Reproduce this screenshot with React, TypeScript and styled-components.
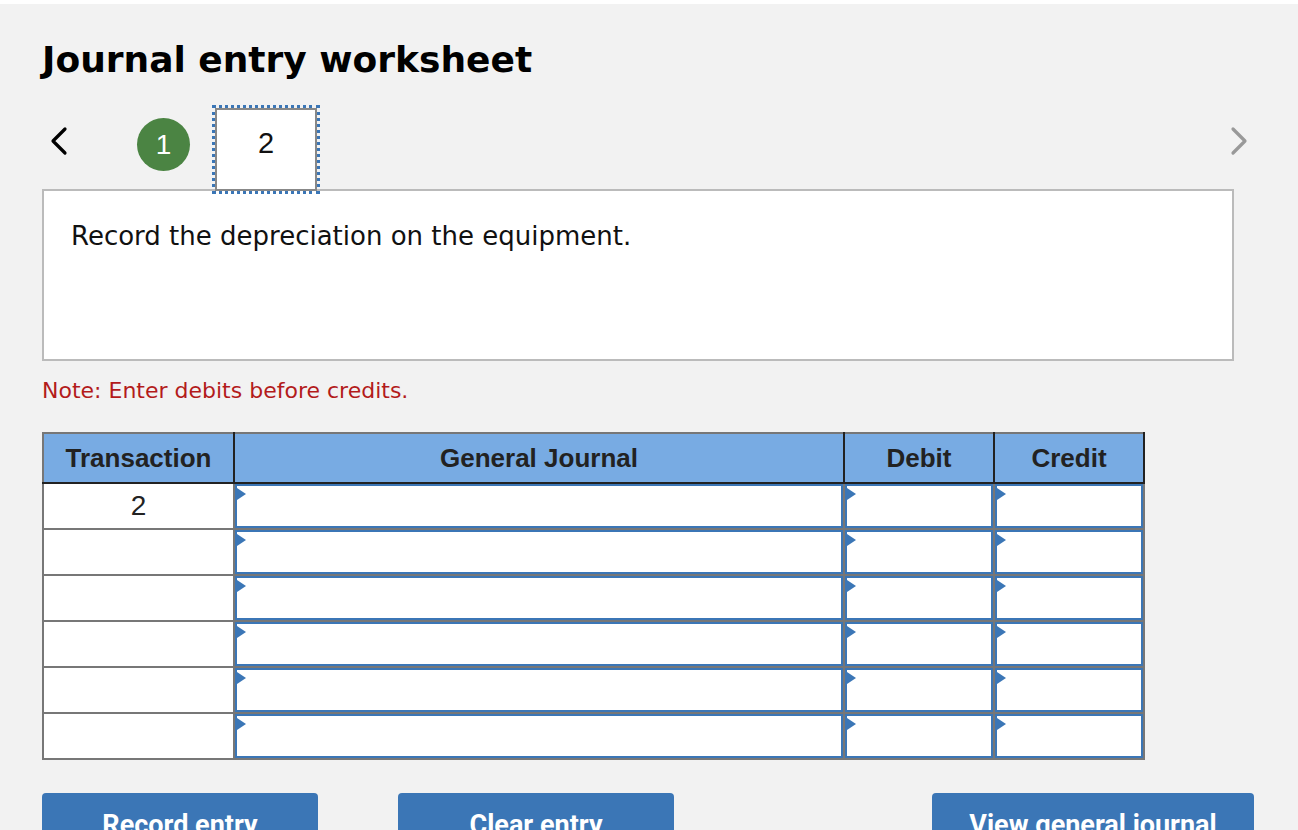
import styled, { createGlobalStyle } from "styled-components";

const GlobalStyle = createGlobalStyle`
    html, body {
        margin: 0;
        padding: 0;
        background: #ffffff;
    }
    body {
        font-family: "DejaVu Sans", Verdana, sans-serif;
    }
`;

const Page = styled.div`
    margin-top: 4px;
    min-height: 826px;
    background: #f2f2f2;
    padding: 0 44px 0 42px;
    box-sizing: border-box;
    overflow: hidden;
`;

const Title = styled.h1`
    margin: 0;
    padding-top: 36px;
    font-family: "DejaVu Sans", Verdana, sans-serif;
    font-weight: bold;
    font-size: 36px;
    line-height: 40px;
    color: #000;
`;

const NavRow = styled.div`
    display: flex;
    align-items: flex-start;
    height: 83px;
    margin-top: 28px;
    position: relative;
    z-index: 1;
`;

const Arrow = styled.button<{ $muted?: boolean }>`
    display: flex;
    align-items: center;
    justify-content: center;
    width: 30px;
    height: 40px;
    margin-top: 13px;
    padding: 0;
    border: none;
    background: none;
    color: ${(p) => (p.$muted ? "#999999" : "#000000")};
    cursor: pointer;
    margin-left: ${(p) => (p.$muted ? "auto" : "2px")};
`;

const StepDone = styled.div`
    width: 53px;
    height: 53px;
    margin-top: 10px;
    margin-left: 63px;
    border-radius: 50%;
    background: #4b8443;
    color: #fff;
    display: flex;
    align-items: center;
    justify-content: center;
    font-family: "Liberation Sans", Arial, sans-serif;
    font-size: 28px;
`;

const StepActive = styled.div`
    width: 102px;
    height: 83px;
    margin-left: 25px;
    padding-bottom: 12px;
    box-sizing: border-box;
    border: 2px solid #888;
    outline: 3px dotted #3b76b6;
    background: #fff;
    display: flex;
    align-items: center;
    justify-content: center;
    font-family: "Liberation Sans", Arial, sans-serif;
    font-size: 29px;
    color: #111;
`;

const Prompt = styled.div`
    width: 1192px;
    height: 172px;
    margin-top: -2px;
    box-sizing: border-box;
    border: 2px solid #bbbbbb;
    background: #fff;
    padding: 30px 27px;
    font-size: 26px;
    line-height: 30px;
    color: #111;
`;

const Note = styled.p`
    margin: 17px 0 0;
    font-size: 22px;
    line-height: 26px;
    color: #b31b1b;
`;

const Journal = styled.table`
    margin-top: 28px;
    border-collapse: collapse;
    table-layout: fixed;
    width: 1101px;
    font-family: "Liberation Sans", Arial, sans-serif;
`;

const HeadCell = styled.th`
    height: 48px;
    padding: 0;
    background: #78abe3;
    border: 2px solid #222;
    border-top-color: #777;
    font-size: 26px;
    font-weight: bold;
    color: #222;
    text-align: center;

    &:first-child {
        border-left-color: #777;
    }
`;

const Cell = styled.td`
    height: 44px;
    padding: 0;
    border: 2px solid #777;
    background: #fff;
    text-align: center;
    font-size: 28px;
    color: #222;
`;

const EntryBox = styled.div`
    position: relative;
    height: 44px;
    box-sizing: border-box;
    border: 2px solid #3b76b6;
    background: #fff;

    &::before {
        content: "";
        position: absolute;
        left: 0;
        top: 2px;
        border-top: 6px solid transparent;
        border-bottom: 6px solid transparent;
        border-left: 9px solid #3b76b6;
    }
`;

const Actions = styled.div`
    display: flex;
    gap: 80px;
    margin-top: 33px;
    width: 1212px;
`;

const ActionButton = styled.button<{ $wide?: boolean }>`
    width: ${(p) => (p.$wide ? "322px" : "276px")};
    height: 64px;
    border: none;
    border-radius: 4px;
    background: #3b76b6;
    color: #fff;
    font-family: Roboto, "Liberation Sans", sans-serif;
    font-weight: bold;
    font-size: 27px;
    cursor: pointer;

    &:last-child {
        margin-left: auto;
    }
`;

const ChevronLeft = () => (
    <svg width="20" height="30" viewBox="0 0 20 30" fill="none">
        <path d="M16 3 L4 15 L16 27" stroke="currentColor" strokeWidth="3.2" strokeLinecap="round" strokeLinejoin="round" />
    </svg>
);

const ChevronRight = () => (
    <svg width="20" height="30" viewBox="0 0 20 30" fill="none">
        <path d="M4 3 L16 15 L4 27" stroke="currentColor" strokeWidth="3.2" strokeLinecap="round" strokeLinejoin="round" />
    </svg>
);

const rows = [
    { transaction: "2" },
    { transaction: "" },
    { transaction: "" },
    { transaction: "" },
    { transaction: "" },
    { transaction: "" },
];

export default function App() {
    return (
        <>
            <GlobalStyle />
            <Page>
                <Title>Journal entry worksheet</Title>

                <NavRow>
                    <Arrow aria-label="previous">
                        <ChevronLeft />
                    </Arrow>
                    <StepDone>1</StepDone>
                    <StepActive>2</StepActive>
                    <Arrow $muted aria-label="next">
                        <ChevronRight />
                    </Arrow>
                </NavRow>

                <Prompt>Record the depreciation on the equipment.</Prompt>

                <Note>Note: Enter debits before credits.</Note>

                <Journal>
                    <colgroup>
                        <col style={{ width: 191 }} />
                        <col style={{ width: 610 }} />
                        <col style={{ width: 150 }} />
                        <col style={{ width: 150 }} />
                    </colgroup>
                    <thead>
                        <tr>
                            <HeadCell>Transaction</HeadCell>
                            <HeadCell>General Journal</HeadCell>
                            <HeadCell>Debit</HeadCell>
                            <HeadCell>Credit</HeadCell>
                        </tr>
                    </thead>
                    <tbody>
                        {rows.map((row, i) => (
                            <tr key={i}>
                                <Cell>{row.transaction}</Cell>
                                <Cell><EntryBox /></Cell>
                                <Cell><EntryBox /></Cell>
                                <Cell><EntryBox /></Cell>
                            </tr>
                        ))}
                    </tbody>
                </Journal>

                <Actions>
                    <ActionButton>Record entry</ActionButton>
                    <ActionButton>Clear entry</ActionButton>
                    <ActionButton $wide>View general journal</ActionButton>
                </Actions>
            </Page>
        </>
    );
}
